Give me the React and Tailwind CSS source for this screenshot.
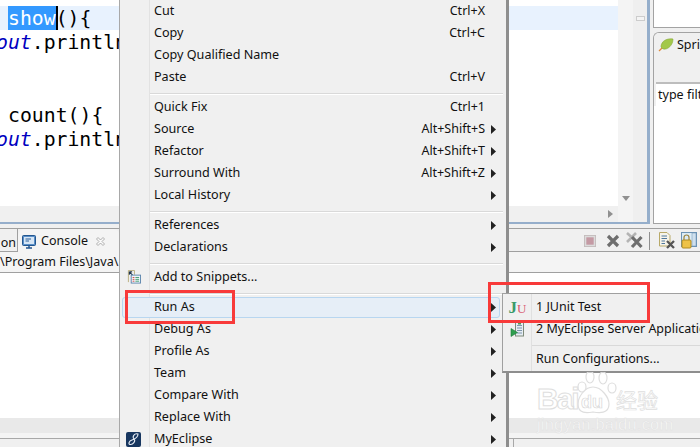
import React from "react";

const ui = "font-['Noto_Sans',sans-serif]";

function Arrow() {
  return (
    <svg width="5" height="9" viewBox="0 0 5 9" className="shrink-0">
      <path d="M0 0 L5 4.5 L0 9 Z" fill="#222" />
    </svg>
  );
}

function Row({ label, keys, sub, icon }) {
  return (
    <div className="h-[22px] flex items-center relative">
      <div className="w-[30px] h-full shrink-0 flex items-center justify-center">{icon}</div>
      <div className="flex-1 pl-[4px] text-[12.6px] leading-[22px] text-[#111] whitespace-nowrap">{label}</div>
      {keys && <div className="text-[12.5px] leading-[22px] text-[#111] whitespace-nowrap mr-[3px]">{keys}</div>}
      <div className="w-[18px] pl-[3px] shrink-0 flex items-center">{sub && <Arrow />}</div>
    </div>
  );
}

function Sep() {
  return (
    <div className="h-[8px] pl-[30px] pr-[3px] pt-[5px]">
      <div className="h-[1px] bg-[#d9d9d9]" />
      <div className="h-[1px] bg-white" />
    </div>
  );
}

function SnippetIcon() {
  return (
    <svg width="14" height="14" viewBox="0 0 15 15" className="-ml-[2px]">
      <path d="M1.5 .5 H8 V5 M1.5 .5 V13" fill="none" stroke="#b9ad7e" />
      <path d="M2.5 2 L6 5.5 M2.5 2 V5 M2.5 2 H5.5" fill="none" stroke="#22364f" strokeWidth="1.1" />
      <rect x="4.5" y="5.5" width="10" height="8.5" fill="#f4f8fc" stroke="#5d85ad" />
      <path d="M6 8 H8 M6 10 H8 M6 12 H8" stroke="#d04040" />
      <path d="M9 8 H13 M9 10 H13 M9 12 H13" stroke="#3a9a6a" />
    </svg>
  );
}

function MyEclipseIcon() {
  return (
    <svg width="15" height="15" viewBox="0 0 15 15" className="-ml-[3px]">
      <rect width="15" height="15" rx="2" fill="#17365f" />
      <path d="M12 2 C8 1 6 5 8 7 C10 9 7 13 4 12.5 C2 12 3 9 6 8 C9 7 12 5 12 2 Z" fill="none" stroke="#e8eef6" strokeWidth="1.1" />
    </svg>
  );
}

function ServerIcon() {
  return (
    <svg width="15" height="15" viewBox="0 0 15 15">
      <rect x="5.5" y=".5" width="8" height="13.5" fill="#e6edf3" stroke="#7f8a7a" />
      <path d="M7 3.5 H12 M7 6 H12 M7 8.5 H12 M7 11 H12" stroke="#7d95ad" />
      <rect x="8" y="0" width="3" height="2.5" fill="#4d9a57" />
      <path d="M1 6.5 L7.5 10.5 L1 14.5 Z" fill="#2f9e4f" stroke="#1d7a3a" strokeWidth=".6" />
    </svg>
  );
}

function JUnitIcon() {
  return (
    <span className="font-['Liberation_Serif',serif] font-bold leading-none flex items-baseline">
      <span className="text-[17px] text-[#3a9a6a]">J</span>
      <span className="text-[13px] text-[#d8566e] font-normal">U</span>
    </span>
  );
}

function CrossIcon({ size = 14, color = "#6e6e6e" }) {
  return (
    <svg width={size} height={size} viewBox="0 0 14 14">
      <path d="M2 2 L12 12 M12 2 L2 12" stroke={color} strokeWidth="3.2" />
    </svg>
  );
}

function Toolbar() {
  return (
    <div className="ml-auto flex items-center h-full">
      <svg width="12" height="12" viewBox="0 0 13 13" className="mr-[10px]">
        <rect x=".5" y=".5" width="12" height="12" fill="#dcdcdc" stroke="#c4bcbc" />
        <rect x="2.5" y="2.5" width="8" height="8" fill="#c49aa4" />
      </svg>
      <div className="mr-[6px]"><CrossIcon /></div>
      <svg width="17" height="17" viewBox="0 0 17 17" className="mr-[6px]">
        <path d="M1 1 L11 10 M10 1 L1 10" stroke="#b4b4b4" strokeWidth="2.6" />
        <path d="M6 5 L15.500 15 M15.500 5 L6 15" stroke="#6e6e6e" strokeWidth="3.2" />
      </svg>
      <div className="w-[1px] h-[18px] bg-[#909090] mr-[9px]" />
      <svg width="16" height="17" viewBox="0 0 16 17" className="mr-[6px]">
        <path d="M.5 .5 H8 L11 3.500 V14 H.5 Z" fill="#f6f4ea" stroke="#b8a968" />
        <path d="M2.500 4 H8 M2.500 6.500 H8 M2.500 9 H6 M2.500 11.500 H6" stroke="#50789c" />
        <path d="M8 9 L15 16 M15 9 L8 16" stroke="#555" strokeWidth="2.300" />
      </svg>
      <svg width="16" height="17" viewBox="0 0 16 17" className="mr-[3px]">
        <rect x=".5" y=".5" width="15" height="14" fill="#dcebf5" stroke="#6c93b5" />
        <rect x="11" y="1" width="4" height="13" fill="#cfe0ee" stroke="#6c93b5" strokeWidth=".5" />
        <path d="M3 8 V5.500 a2.500 2.500 0 0 1 5 0 V8" fill="none" stroke="#9c8440" strokeWidth="1.200" />
        <rect x="1" y="8" width="9" height="8" rx="1" fill="#eec247" stroke="#b08a20" />
      </svg>
    </div>
  );
}

export default function App() {
  return (
    <div className={"relative w-[700px] h-[447px] overflow-hidden bg-[#f0f0f0] " + ui}>
      {/* Top region */}
      <div className="h-[228px] flex">
        <div className="w-[650px] shrink-0 h-[224px] border-r-[3px] border-b-[2px] border-[#95aecb] flex flex-col">
          <div className="flex-1 flex min-h-0">
            <div className="w-[618px] shrink-0 flex flex-col">
              <div className="flex-1 bg-white pt-[6px] font-['DejaVu_Sans_Mono',monospace] text-[19.8px] leading-[26px] text-black overflow-hidden whitespace-nowrap">
                <div className="h-[24px] bg-[#e8f2fe] pl-[8px] flex">
                  <span className="bg-[#3399ff] text-white h-[24px]">show</span>
                  <span className="border-l-[2px] border-black -mr-[2px]" />
                  <span>(){"{"}</span>
                </div>
                <div className="h-[24px] -ml-[4px]"><span className="italic text-[#0000c0]">out</span>.println</div>
                <div className="h-[49px]" />
                <div className="h-[24px] pl-[8px]">count(){"{"}</div>
                <div className="h-[24px] -ml-[4px]"><span className="italic text-[#0000c0]">out</span>.println</div>
              </div>
              <div className="h-[16px] bg-[#f0f0f0] flex items-center justify-end pr-[5px]">
                <svg width="5" height="8" viewBox="0 0 5 8"><path d="M0 0 L5 4 L0 8 Z" fill="#909090" /></svg>
              </div>
            </div>
            <div className="w-[15px] shrink-0 bg-[#f4f4f4] flex flex-col justify-end items-center pb-[21px]">
              <svg width="8" height="5" viewBox="0 0 8 5"><path d="M0 0 L8 0 L4 5 Z" fill="#909090" /></svg>
            </div>
            <div className="flex-1 bg-[#efefef] pt-[16px] flex justify-center">
              <div className="w-[9px] h-[5px] border border-[#cccccc] bg-[#f4f4f4]" />
            </div>
          </div>
        </div>
        <div className="flex-1 min-w-0 h-[224px] ml-[3px] flex flex-col">
          <div className="h-[28px] bg-white border-l border-b border-[#a3a3a3]" />
          <div className="flex-1 mt-[4px] border-l border-b border-t border-[#a3a3a3] rounded-tl-[6px] flex flex-col overflow-hidden">
            <div className="h-[49px] bg-[#f0f0f0]">
              <div className="flex items-center h-[24px] pl-[4px] gap-[3px] whitespace-nowrap text-[12.5px] text-[#111]">
                <svg width="16" height="14" viewBox="0 0 16 14" className="shrink-0">
                  <path d="M1 13 L5 9" stroke="#e08a3a" strokeWidth="1.300" />
                  <path d="M3 9 C3 3 9 0 15 1 C15 7 10 12 5 11 Z" fill="#a3c84a" stroke="#88aa3a" strokeWidth=".6" />
                </svg>
                <span>Spring</span>
              </div>
            </div>
            <div className="h-[24px] bg-white border-t-2 border-[#bdbdbd] ml-[2px] pl-[2px] text-[12.5px] leading-[21px] whitespace-nowrap text-[#111]">type filter</div>
            <div className="flex-1 bg-white" />
          </div>
        </div>
      </div>

      {/* Console region */}
      <div className="h-[24px] border-t border-[#a0a0a0] flex relative">
        <div className="flex h-[23px] text-[12.5px] text-[#111]">
          <div className="w-[18px] pt-[4px] border-r border-[#a0a0a0] overflow-hidden whitespace-nowrap leading-[19px] flex justify-end pr-[1px]">on</div>
          <div className="w-[102px] bg-[#f4f4f4] rounded-t-[7px] flex items-center pl-[4px] pt-[2px] gap-[5px]">
            <svg width="14" height="14" viewBox="0 0 14 14" className="shrink-0">
              <rect x=".5" y=".5" width="13" height="10" rx="1" fill="#5a8fc8" stroke="#23568f" />
              <rect x="2" y="2" width="10" height="7" fill="#d7e6f5" />
              <path d="M3.500 4 H9 M3.500 6 H7" stroke="#2a5f98" />
              <path d="M4 13 H10 M7 11 V13" stroke="#23568f" strokeWidth="1.500" />
            </svg>
            <span>Console</span>
            <svg width="11" height="11" viewBox="0 0 11 11" className="ml-[2px] shrink-0">
              <path d="M1.500 3 L3 1.500 L5.500 4 L8 1.500 L9.500 3 L7 5.500 L9.500 8 L8 9.500 L5.500 7 L3 9.500 L1.500 8 L4 5.500 Z" fill="#fafafa" stroke="#9a9a9a" strokeWidth=".8" />
            </svg>
          </div>
        </div>
        <Toolbar />
      </div>
      <div className="h-[20px] bg-[#f4f4f4] border-t border-[#a0a0a0] border-b whitespace-nowrap overflow-hidden text-[12.5px] leading-[19px] text-[#111] box-content -mt-[1px]">\Program Files\Java\</div>
      <div className="h-[145px] bg-white" />
      <div className="h-[15px] bg-[#e9e9e9]" />
      <div className="h-[5px] bg-[#f4f4f4]" />
      <div className="h-[9px] border-t border-[#a8a8a8] bg-[#f0f0f0] flex">
        <div className="ml-[513px] w-[1px] bg-[#a8a8a8]" />
      </div>

      {/* Context menu */}
      <div className="absolute left-[119px] top-0 w-[390px] h-[450px] bg-[#f0f0f0] border-l border-[#a8a8a8] border-r-[3px] border-r-[#8e8e8e]">
        <div className="absolute left-[29px] top-0 bottom-0 w-[1px] bg-[#e2e2e2]" />
        <Row label="Cut" keys="Ctrl+X" />
        <Row label="Copy" keys="Ctrl+C" />
        <Row label="Copy Qualified Name" />
        <Row label="Paste" keys="Ctrl+V" />
        <Sep />
        <Row label="Quick Fix" keys="Ctrl+1" />
        <Row label="Source" keys="Alt+Shift+S" sub />
        <Row label="Refactor" keys="Alt+Shift+T" sub />
        <Row label="Surround With" keys="Alt+Shift+Z" sub />
        <Row label="Local History" sub />
        <Sep />
        <Row label="References" sub />
        <Row label="Declarations" sub />
        <Sep />
        <Row label="Add to Snippets..." icon={<SnippetIcon />} />
        <Sep />
        <div className="relative">
          <div className="absolute left-[2px] right-[6px] top-[1px] bottom-0 rounded-[3px] border border-[#b8d6f0] bg-[#e6eef7]" />
          <Row label="Run As" sub />
        </div>
        <Row label="Debug As" sub />
        <Row label="Profile As" sub />
        <Row label="Team" sub />
        <Row label="Compare With" sub />
        <Row label="Replace With" sub />
        <Row label="MyEclipse" sub icon={<MyEclipseIcon />} />
      </div>

      {/* Submenu */}
      <div className="absolute left-[502px] top-[293px] w-[240px] h-[80px] bg-[#f0f0f0] border border-[#a0a0a0] border-b-[2px] border-b-[#8e8e8e] pt-[2px] text-[12.5px] text-[#111] whitespace-nowrap">
        <div className="absolute left-[28px] top-0 bottom-0 w-[1px] bg-[#e0e0e0]" />
        <div className="h-[22px] flex items-center"><div className="w-[29px] flex justify-center"><JUnitIcon /></div><span className="pl-[4px]">1 JUnit Test</span></div>
        <div className="h-[22px] flex items-center"><div className="w-[29px] flex justify-center"><ServerIcon /></div><span className="pl-[4px]">2 MyEclipse Server Application</span></div>
        <div className="h-[8px] pl-[29px] pt-[5px]"><div className="h-[1px] bg-[#d9d9d9]" /></div>
        <div className="h-[22px] flex items-center"><div className="w-[29px]" /><span className="pl-[4px]">Run Configurations...</span></div>
      </div>

      {/* Annotation rectangles */}
      <div className="absolute left-[125px] top-[290px] w-[110px] h-[34px] border-[3px] border-[#f83a3a]" />
      <div className="absolute left-[488px] top-[282px] w-[162px] h-[41px] border-[3px] border-[#f83a3a]" />

      {/* Watermark */}
      <div className="absolute left-[537px] top-[372px] w-[125px] h-[62px] pointer-events-none">
        <svg width="125" height="62" viewBox="0 0 125 62" className="absolute left-0 top-0">
          <g fill="#ffffff" fillOpacity=".5" stroke="#dedede" strokeWidth="1.200">
            <ellipse cx="53" cy="5" rx="4" ry="6" />
            <ellipse cx="66" cy="6" rx="4" ry="6" />
            <ellipse cx="45" cy="15" rx="4" ry="5" />
            <ellipse cx="75" cy="16" rx="4" ry="5" />
            <path d="M56 15 C65 15 72 26 72 32 C72 42 62 41 56 40 C50 41 41 42 41 32 C41 26 47 15 56 15 Z" />
          </g>
        </svg>
        <span className="absolute left-0 top-[9px] font-['Liberation_Sans',sans-serif] font-bold text-[30px] leading-[36px] tracking-[-2px] text-white/60 [-webkit-text-stroke:1px_#dedede]">Bai</span>
        <span className="absolute left-[44px] top-[19px] font-['Liberation_Sans',sans-serif] font-bold text-[18px] leading-[22px] text-white/60 [-webkit-text-stroke:.7px_#d8d8d8]">du</span>
        <span className="absolute left-[79px] top-[13px] font-['Noto_Sans_CJK_SC',sans-serif] text-[21px] leading-[28px] text-white/60 [-webkit-text-stroke:.7px_#dedede]">经验</span>
        <span className="absolute left-0 top-[43px] font-['Liberation_Sans',sans-serif] text-[16.500px] leading-[18px] tracking-[.2px] whitespace-nowrap text-white/80 [-webkit-text-stroke:.5px_#e0e0e0]">jingyan.baidu.com</span>
      </div>
    </div>
  );
}
